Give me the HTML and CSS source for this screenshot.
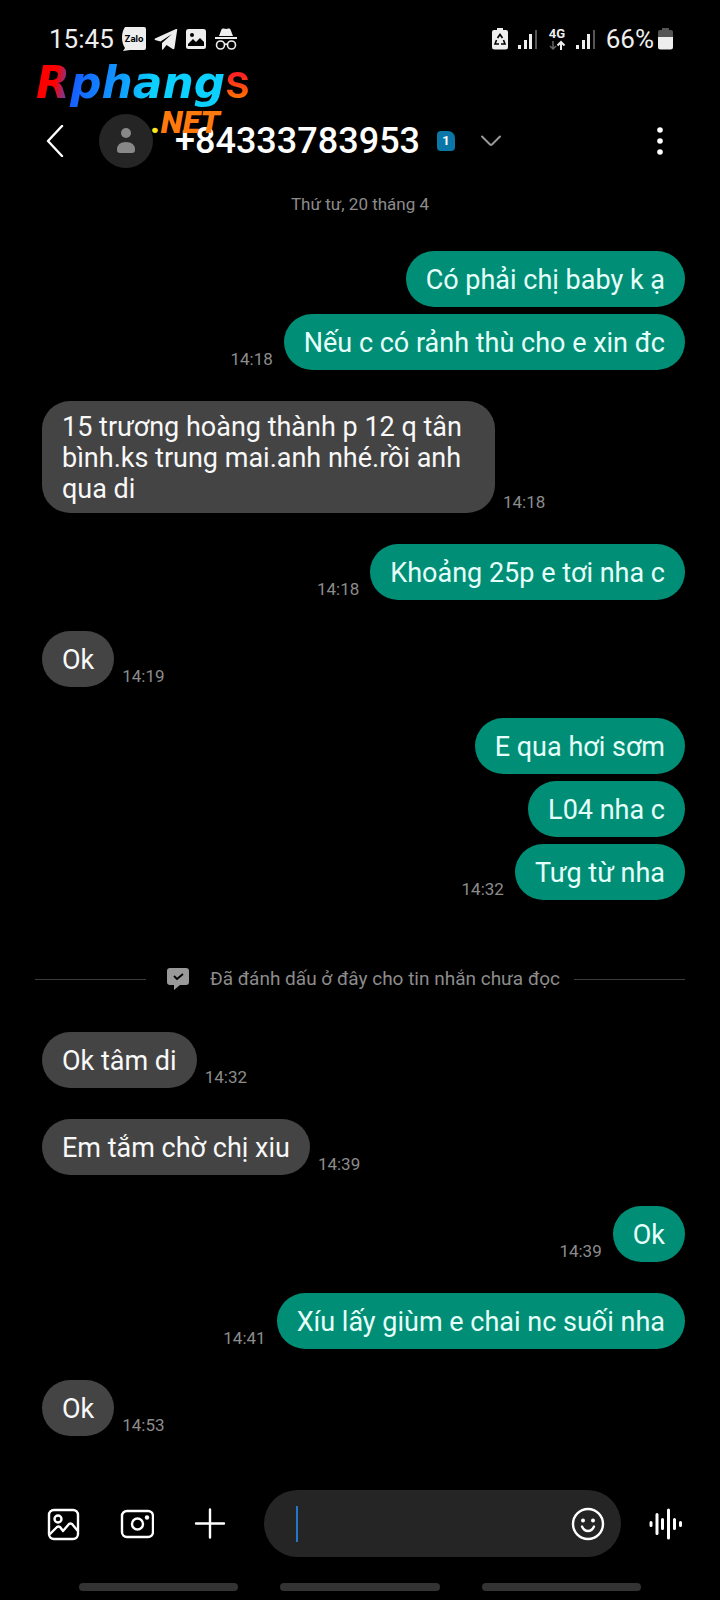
FILE: index.html
```html
<!DOCTYPE html>
<html lang="vi">
<head>
<meta charset="utf-8">
<meta name="viewport" content="width=device-width, initial-scale=1">
<title>+84333783953</title>
<link rel="stylesheet" href="styles.css">
</head>
<body>
<div class="screen">
  <div class="status">
    <div class="status-left">
      <span>15:45</span>
      <svg width="24" height="24" viewBox="0 0 24 24"><path fill="#eee" d="M3 0h19a2 2 0 0 1 2 2v19a2 2 0 0 1-2 2H8l-7 1 2-3C-1 16-1 5 3 0z"/><text x="12" y="15" text-anchor="middle" class="zalo">Zalo</text></svg>
      <svg width="24" height="24" viewBox="0 0 24 24"><path fill="#eee" d="M1 11.500 22 2q1.300-.3 1.200.8L20.500 21q-.5 1.800-1.800 1L12.500 18 9 22.500q-1 .6-1-.7V16L18 7 6.500 14.500 1 13q-1-.7 0-1.500z"/></svg>
      <svg width="20" height="20" viewBox="0 0 20 20"><path fill="#eee" fill-rule="evenodd" d="M2.500 0h15A2.500 2.500 0 0 1 20 2.500v15a2.500 2.500 0 0 1-2.500 2.500h-15A2.500 2.500 0 0 1 0 17.500v-15A2.500 2.500 0 0 1 2.500 0zM6 4a2 2 0 1 0 0 4 2 2 0 0 0 0-4zM2 17h16v-4l-4-4-4 4-3-3-5 5z"/></svg>
      <svg width="24" height="24" viewBox="0 0 24 24"><path fill="#eee" d="M5 9 7.500 2.500Q8 1 9.500 1.500L12 2l2.500-.5q1.500-.5 2 1L19 9zM1 10h22v2H1z"/><g fill="none" stroke="#eee" stroke-width="1.600"><circle cx="6.500" cy="18" r="4"/><circle cx="17.500" cy="18" r="4"/><path d="M10.500 17.500q1.500-1 3 0"/></g></svg>
    </div>
    <div class="status-right">
      <svg width="16" height="22" viewBox="0 0 16 22"><path fill="#eee" d="M5 0h6v2h3a2 2 0 0 1 2 2v15a2.500 2.500 0 0 1-2.500 2.500h-11A2.500 2.500 0 0 1 0 19V4a2 2 0 0 1 2-2h3z"/><path fill="none" stroke="#000" stroke-width="1.600" d="M5.500 10 8 6.500l2.500 3.500M11.500 12l1.500 4H9M7 16H3l1.500-4"/></svg>
      <svg width="20" height="20" viewBox="0 0 20 20"><path fill="#eee" d="M0 16h3v4H0zM6 11h3v9H6zM11 5h3v15h-3z"/><path fill="#555" d="M17 1h2v19h-2z"/></svg>
      <svg class="net-icon" width="18" height="24" viewBox="0 0 18 24"><text x="9" y="11" text-anchor="middle" class="net-type">4G</text><path fill="none" stroke="#666" stroke-width="1.500" d="M5 14v8M2 19l3 3 3-3"/><path fill="none" stroke="#eee" stroke-width="2" d="M13 23v-8M9.500 18.500 13 15l3.500 3.500"/></svg>
      <svg width="20" height="20" viewBox="0 0 20 20"><path fill="#eee" d="M0 16h3v4H0zM6 11h3v9H6zM11 5h3v15h-3z"/><path fill="#555" d="M17 1h2v19h-2z"/></svg>
      <span class="battery"><span>66%</span>
      <svg width="15" height="22" viewBox="0 0 15 22"><path fill="#555" d="M4 0h7v2h2a2 2 0 0 1 2 2v6H0V4a2 2 0 0 1 2-2h2z"/><path fill="#eee" d="M0 9h15v10a2.500 2.500 0 0 1-2.500 2.500h-10A2.500 2.500 0 0 1 0 19z"/></svg></span>
    </div>
  </div>

  <header class="header">
    <button class="icon-btn" aria-label="Quay lại"><svg width="18" height="32" viewBox="0 0 18 32"><path class="line" d="M16 1 2 16l14 15"/></svg></button>
    <div class="avatar"><svg width="18" height="26" viewBox="0 0 18 26"><circle cx="9" cy="5" r="5" fill="#888"/><path fill="#888" d="M0 22q0-8 9-8t9 8q0 3-3 3H3q-3 0-3-3z"/></svg></div>
    <h1 class="title">+84333783953</h1>
    <span class="sim">1</span>
    <button class="icon-btn expand" aria-label="Mở rộng"><svg width="20" height="12" viewBox="0 0 20 12"><path fill="none" stroke="#999" stroke-width="2" stroke-linecap="round" d="m1 1.500 8 8q1 .8 2 0l8-8"/></svg></button>
    <button class="icon-btn more" aria-label="Tùy chọn khác"><svg width="6" height="28" viewBox="0 0 6 28"><g fill="#fff"><circle cx="3" cy="3" r="2.800"/><circle cx="3" cy="14" r="2.800"/><circle cx="3" cy="25" r="2.800"/></g></svg></button>
  </header>
  <div class="brand"><span class="brand-main">Rphang</span><span class="brand-s">s</span><span class="brand-net"><b>.</b>NET</span></div>

  <main class="chat">
    <p class="date">Thứ tư, 20 tháng 4</p>
    <div class="group sent">
      <div class="msg"><p class="bubble">Có phải chị baby k ạ</p></div>
      <div class="msg"><p class="bubble">Nếu c có rảnh thù cho e xin đc</p><time>14:18</time></div>
    </div>
    <div class="group">
      <div class="msg"><p class="bubble">15 trương hoàng thành p 12 q tân bình.ks trung mai.anh nhé.rồi anh qua di</p><time>14:18</time></div>
    </div>
    <div class="group sent">
      <div class="msg"><p class="bubble">Khoảng 25p e tơi nha c</p><time>14:18</time></div>
    </div>
    <div class="group">
      <div class="msg"><p class="bubble">Ok</p><time>14:19</time></div>
    </div>
    <div class="group sent">
      <div class="msg"><p class="bubble">E qua hơi sơm</p></div>
      <div class="msg"><p class="bubble">L04 nha c</p></div>
      <div class="msg"><p class="bubble">Tưg từ nha</p><time>14:32</time></div>
    </div>
    <div class="unread">
      <svg width="22" height="22" viewBox="0 0 22 22"><path fill="#999" d="M3 0h16a3 3 0 0 1 3 3v11a3 3 0 0 1-3 3h-6l-6 5v-5H3a3 3 0 0 1-3-3V3a3 3 0 0 1 3-3z"/><path fill="none" stroke="#000" stroke-width="1.800" d="m7 8 3 3 6-5"/></svg>
      <span>Đã đánh dấu ở đây cho tin nhắn chưa đọc</span>
    </div>
    <div class="group">
      <div class="msg"><p class="bubble">Ok tâm di</p><time>14:32</time></div>
    </div>
    <div class="group">
      <div class="msg"><p class="bubble">Em tắm chờ chị xiu</p><time>14:39</time></div>
    </div>
    <div class="group sent">
      <div class="msg"><p class="bubble">Ok</p><time>14:39</time></div>
    </div>
    <div class="group sent">
      <div class="msg"><p class="bubble">Xíu lấy giùm e chai nc suối nha</p><time>14:41</time></div>
    </div>
    <div class="group">
      <div class="msg"><p class="bubble">Ok</p><time>14:53</time></div>
    </div>
  </main>

  <footer class="composer">
    <div class="tools">
      <button class="icon-btn" aria-label="Thư viện"><svg width="34" height="34" viewBox="0 0 34 34"><g class="line"><rect x="3" y="3" width="29" height="29" rx="5"/><circle cx="12" cy="12" r="3.500"/><path d="m4 27 7-7q1.500-1 3 0l3 4 6-7q1.500-1 3 0l5 6"/></g></svg></button>
      <button class="icon-btn" aria-label="Máy ảnh"><svg width="34" height="34" viewBox="0 0 34 34"><g class="line"><rect x="2" y="4" width="31" height="26" rx="5"/><circle cx="17.500" cy="17" r="5.500"/></g><circle cx="27" cy="10.500" r="2.200" fill="#fff"/></svg></button>
      <button class="icon-btn" aria-label="Thêm"><svg width="34" height="34" viewBox="0 0 34 34"><path class="line" d="M16 2.500v28M2 16.500h28"/></svg></button>
    </div>
    <div class="field">
      <span class="caret"></span>
      <input type="text" aria-label="Tin nhắn">
      <button class="icon-btn" aria-label="Biểu tượng cảm xúc"><svg width="34" height="34" viewBox="0 0 34 34"><g class="line"><circle cx="17" cy="17" r="15"/><path d="M11 19.500q2 4.500 6 4.500t6-4.500"/></g><circle cx="12" cy="13.500" r="2" fill="#fff"/><circle cx="22" cy="13.500" r="2" fill="#fff"/></svg></button>
    </div>
    <button class="icon-btn" aria-label="Ghi âm"><svg width="34" height="34" viewBox="0 0 34 34"><path class="line wave" d="M2 15.500v3M8 7.500v19M13.500 12.500v9M19.500 3v28M25.500 12.500v9M31.500 15.500v3"/></svg></button>
  </footer>
  <div class="navbar"><span></span><span></span><span></span></div>
</div>
</body>
</html>
```

FILE: styles.css
```css
* { box-sizing: border-box; }
body { margin: 0; background: #000; color: #fff; font-family: Roboto, "Noto Sans", sans-serif; }
p, h1 { margin: 0; }
svg { display: block; flex: none; }
.screen { position: relative; min-height: 100vh; display: flex; flex-direction: column; }

.status { height: 78px; padding: 0 47px 0 49px; display: flex; justify-content: space-between; align-items: center; font-size: 26px; line-height: 32px; color: #eee; }
.status-left { display: flex; align-items: center; gap: 8px; }
.status-right { display: flex; align-items: center; gap: 10px; }
.battery { display: flex; align-items: center; gap: 4px; }
.zalo { font: 700 9px Inter, sans-serif; fill: #000; }
.net-icon { overflow: visible; }
.net-type { font: 700 13px Roboto, sans-serif; fill: #eee; }

.header { height: 116px; margin-top: 5px; padding: 0 57px 0 46px; display: flex; align-items: center; }
.icon-btn { background: none; border: 0; padding: 0; color: inherit; flex: none; }
.line { fill: none; stroke: #fff; stroke-width: 2.4; stroke-linecap: round; stroke-linejoin: round; }
.wave { stroke-width: 3; }
.avatar { width: 54px; height: 54px; margin-left: 35px; border-radius: 50%; background: #252525; display: flex; align-items: center; justify-content: center; }
.title { margin-left: 22px; font-size: 36px; line-height: 42px; font-weight: 500; }
.sim { margin-left: 17px; width: 18px; height: 20px; border-radius: 4px 7px 4px 4px; background: #0b77a8; font-size: 13px; line-height: 20px; font-weight: 700; text-align: center; }
.expand { margin-left: 26px; }
.more { margin-left: auto; }

.brand { position: absolute; left: 36px; top: 56px; font-family: "DejaVu Sans", sans-serif; font-size: 44px; line-height: 52px; font-weight: 700; white-space: nowrap; }
.brand-main, .brand-s { color: transparent; background-clip: text; -webkit-background-clip: text; }
.brand-main { font-style: italic; background-image: linear-gradient(100deg, #f00 12%, #1560ff 22%, #109cff 45%, #0cd0ff 62%); }
.brand-s { font-family: Roboto, sans-serif; font-size: 48px; font-weight: 500; background-image: linear-gradient(#f22 40%, #ff7400 80%); }
.brand-net { position: absolute; right: 30px; top: 47px; font: italic 900 32px/38px Roboto, sans-serif; color: #ff7a0c; }
.brand-net b { color: #ffe51a; }

.chat { flex: 1; padding: 0 35px 31px 42px; display: flex; flex-direction: column; gap: 31px; }
.date { margin: -6px 7px 0 0; text-align: center; font-size: 17px; line-height: 22px; color: #8c8c8c; }
.date + .group { margin-top: 5px; }
.group { display: flex; flex-direction: column; gap: 7px; }
.msg { display: flex; align-items: flex-end; gap: 8px; }
.sent .msg { flex-direction: row-reverse; gap: 11px; }
.bubble { min-height: 56px; max-width: 453px; padding: 11px 20px 8px; border-radius: 28px; background: #444; font-size: 27px; line-height: 31px; color: #f8f8f8; display: flex; align-items: center; }
.sent .bubble { background: #008f76; color: #e6fffa; }
time { font-size: 17px; line-height: 22px; color: #8c8c8c; }
.unread { margin: 37px 0 11px -7px; display: flex; align-items: center; font-size: 19px; line-height: 22px; color: #8c8c8c; }
.unread svg { margin: 0 21px; }
.unread::before, .unread::after { content: ""; flex: 1; height: 1px; background: #3c3c3c; }
.unread::after { margin-left: 14px; }

.composer { padding: 0 37px 0 46px; display: flex; align-items: center; gap: 28px; }
.tools { display: flex; gap: 40px; margin-right: 8px; }
.field { flex: 1; min-width: 0; height: 67px; border-radius: 34px; background: #252525; padding: 0 16px 0 32px; display: flex; align-items: center; }
.caret { width: 2px; height: 36px; background: #2377c9; }
.field input { flex: 1; min-width: 0; background: none; border: 0; outline: 0; color: #fff; font: 26px Roboto, sans-serif; }
.navbar { padding: 26px 79px 9px; display: flex; gap: 42px; }
.navbar span { flex: 1; height: 8px; border-radius: 4px; background: #333; }
```
